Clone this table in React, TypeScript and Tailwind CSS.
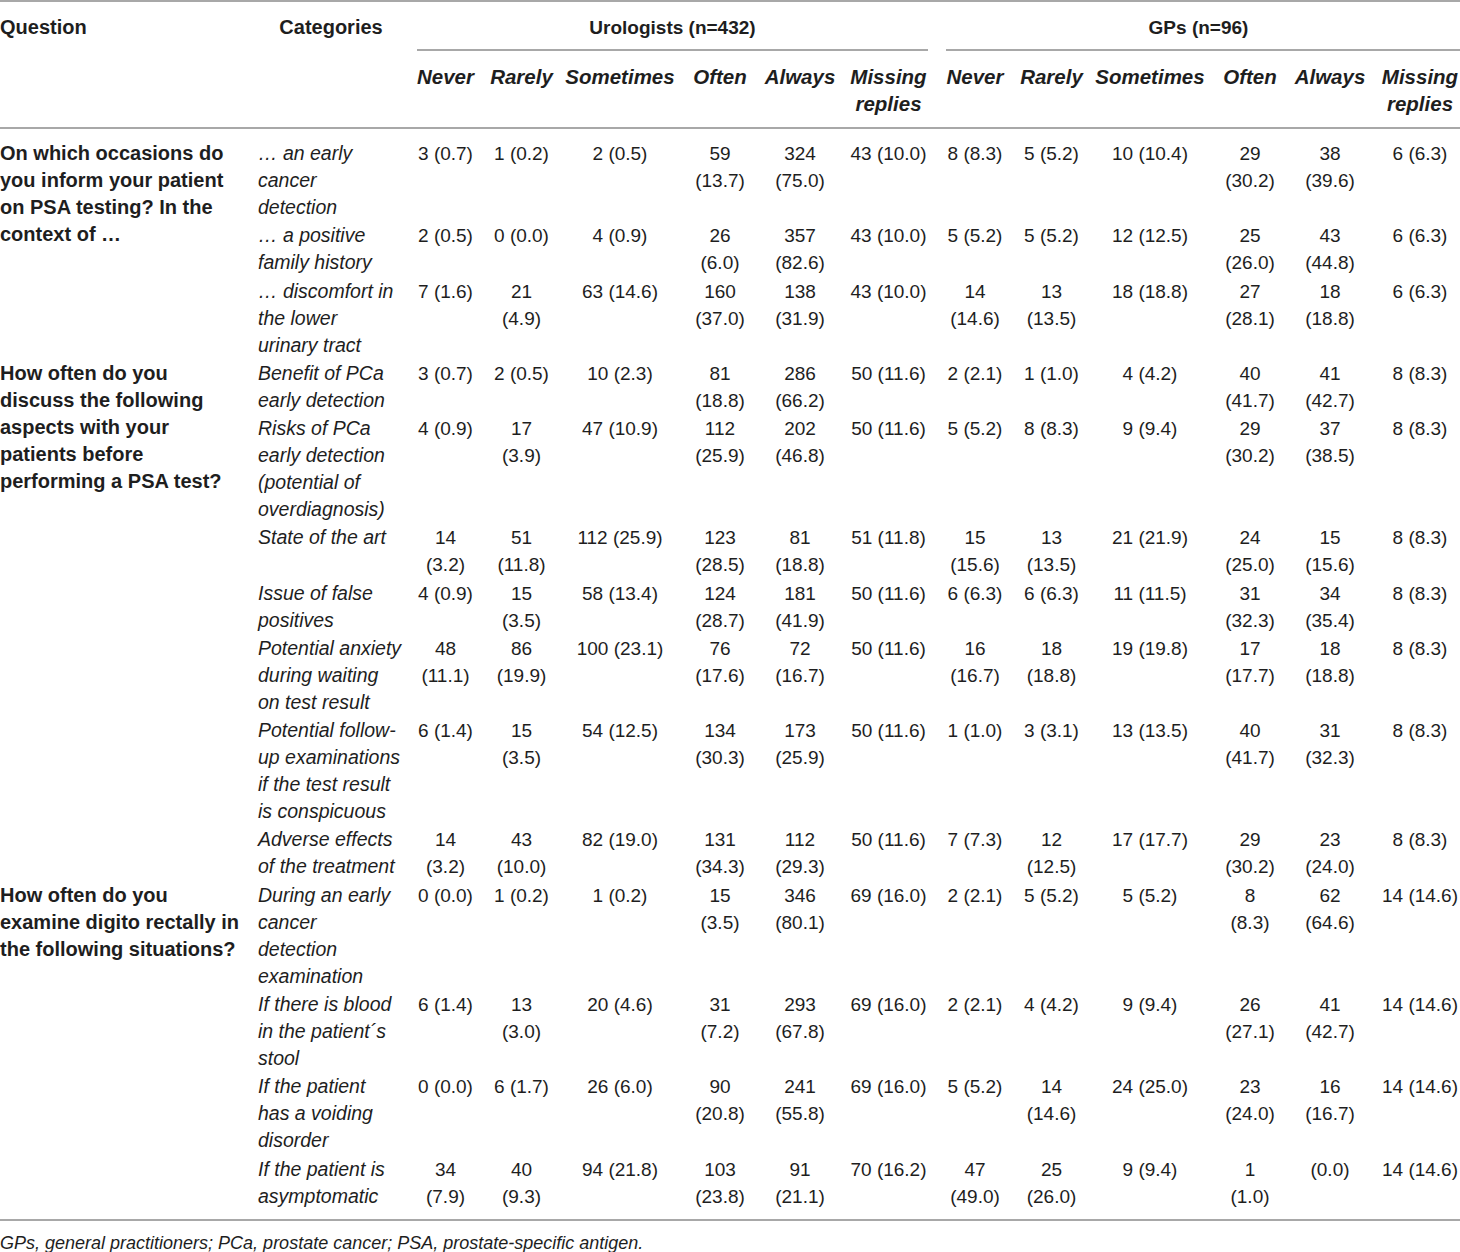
import React from 'react'

type Row = { cat: string; uro: string[]; gp: string[] }
type Group = { question: string; rows: Row[] }

const groups: Group[] = [
    {
        question: 'On which occasions do\nyou inform your patient\non PSA testing? In the\ncontext of …',
        rows: [
            {
                cat: '… an early\ncancer\ndetection',
                uro: ['3 (0.7)', '1 (0.2)', '2 (0.5)', '59\n(13.7)', '324\n(75.0)', '43 (10.0)'],
                gp: ['8 (8.3)', '5 (5.2)', '10 (10.4)', '29\n(30.2)', '38\n(39.6)', '6 (6.3)'],
            },
            {
                cat: '… a positive\nfamily history',
                uro: ['2 (0.5)', '0 (0.0)', '4 (0.9)', '26\n(6.0)', '357\n(82.6)', '43 (10.0)'],
                gp: ['5 (5.2)', '5 (5.2)', '12 (12.5)', '25\n(26.0)', '43\n(44.8)', '6 (6.3)'],
            },
            {
                cat: '… discomfort in\nthe lower\nurinary tract',
                uro: ['7 (1.6)', '21\n(4.9)', '63 (14.6)', '160\n(37.0)', '138\n(31.9)', '43 (10.0)'],
                gp: ['14\n(14.6)', '13\n(13.5)', '18 (18.8)', '27\n(28.1)', '18\n(18.8)', '6 (6.3)'],
            },
        ],
    },
    {
        question: 'How often do you\ndiscuss the following\naspects with your\npatients before\nperforming a PSA test?',
        rows: [
            {
                cat: 'Benefit of PCa\nearly detection',
                uro: ['3 (0.7)', '2 (0.5)', '10 (2.3)', '81\n(18.8)', '286\n(66.2)', '50 (11.6)'],
                gp: ['2 (2.1)', '1 (1.0)', '4 (4.2)', '40\n(41.7)', '41\n(42.7)', '8 (8.3)'],
            },
            {
                cat: 'Risks of PCa\nearly detection\n(potential of\noverdiagnosis)',
                uro: ['4 (0.9)', '17\n(3.9)', '47 (10.9)', '112\n(25.9)', '202\n(46.8)', '50 (11.6)'],
                gp: ['5 (5.2)', '8 (8.3)', '9 (9.4)', '29\n(30.2)', '37\n(38.5)', '8 (8.3)'],
            },
            {
                cat: 'State of the art',
                uro: ['14\n(3.2)', '51\n(11.8)', '112 (25.9)', '123\n(28.5)', '81\n(18.8)', '51 (11.8)'],
                gp: ['15\n(15.6)', '13\n(13.5)', '21 (21.9)', '24\n(25.0)', '15\n(15.6)', '8 (8.3)'],
            },
            {
                cat: 'Issue of false\npositives',
                uro: ['4 (0.9)', '15\n(3.5)', '58 (13.4)', '124\n(28.7)', '181\n(41.9)', '50 (11.6)'],
                gp: ['6 (6.3)', '6 (6.3)', '11 (11.5)', '31\n(32.3)', '34\n(35.4)', '8 (8.3)'],
            },
            {
                cat: 'Potential anxiety\nduring waiting\non test result',
                uro: ['48\n(11.1)', '86\n(19.9)', '100 (23.1)', '76\n(17.6)', '72\n(16.7)', '50 (11.6)'],
                gp: ['16\n(16.7)', '18\n(18.8)', '19 (19.8)', '17\n(17.7)', '18\n(18.8)', '8 (8.3)'],
            },
            {
                cat: 'Potential follow-\nup examinations\nif the test result\nis conspicuous',
                uro: ['6 (1.4)', '15\n(3.5)', '54 (12.5)', '134\n(30.3)', '173\n(25.9)', '50 (11.6)'],
                gp: ['1 (1.0)', '3 (3.1)', '13 (13.5)', '40\n(41.7)', '31\n(32.3)', '8 (8.3)'],
            },
            {
                cat: 'Adverse effects\nof the treatment',
                uro: ['14\n(3.2)', '43\n(10.0)', '82 (19.0)', '131\n(34.3)', '112\n(29.3)', '50 (11.6)'],
                gp: ['7 (7.3)', '12\n(12.5)', '17 (17.7)', '29\n(30.2)', '23\n(24.0)', '8 (8.3)'],
            },
        ],
    },
    {
        question: 'How often do you\nexamine digito rectally in\nthe following situations?',
        rows: [
            {
                cat: 'During an early\ncancer\ndetection\nexamination',
                uro: ['0 (0.0)', '1 (0.2)', '1 (0.2)', '15\n(3.5)', '346\n(80.1)', '69 (16.0)'],
                gp: ['2 (2.1)', '5 (5.2)', '5 (5.2)', '8\n(8.3)', '62\n(64.6)', '14 (14.6)'],
            },
            {
                cat: 'If there is blood\nin the patient´s\nstool',
                uro: ['6 (1.4)', '13\n(3.0)', '20 (4.6)', '31\n(7.2)', '293\n(67.8)', '69 (16.0)'],
                gp: ['2 (2.1)', '4 (4.2)', '9 (9.4)', '26\n(27.1)', '41\n(42.7)', '14 (14.6)'],
            },
            {
                cat: 'If the patient\nhas a voiding\ndisorder',
                uro: ['0 (0.0)', '6 (1.7)', '26 (6.0)', '90\n(20.8)', '241\n(55.8)', '69 (16.0)'],
                gp: ['5 (5.2)', '14\n(14.6)', '24 (25.0)', '23\n(24.0)', '16\n(16.7)', '14 (14.6)'],
            },
            {
                cat: 'If the patient is\nasymptomatic',
                uro: ['34\n(7.9)', '40\n(9.3)', '94 (21.8)', '103\n(23.8)', '91\n(21.1)', '70 (16.2)'],
                gp: ['47\n(49.0)', '25\n(26.0)', '9 (9.4)', '1\n(1.0)', '(0.0)', '14 (14.6)'],
            },
        ],
    },
]

const subHeads = ['Never', 'Rarely', 'Sometimes', 'Often', 'Always', 'Missing\nreplies']

const cols = 'grid grid-cols-[258px_150px_75px_77px_120px_80px_80px_97px_76px_77px_120px_80px_80px_90px]'

export default function App() {
    return (
        <div className="w-[1460px] bg-white text-[#1e1e1e] font-['Liberation_Sans',Arial,sans-serif]">
            <div className="h-[2px] bg-[#a8a8a8]" />

            {/* Header */}
            <div className={cols}>
                <div className="pt-[11.5px] text-[20px] font-bold leading-[27px]">Question</div>
                <div className="pt-[11.5px] pr-[4px] text-center text-[20px] font-bold leading-[27px]">Categories</div>
                <div className="col-span-6 flex flex-col">
                    <div className="pt-[11.5px] pb-[8.5px] text-center text-[19px] font-bold leading-[27px]">
                        Urologists (n=432)
                    </div>
                    <div className="mx-[9px] h-[2px] bg-[#a8a8a8]" />
                </div>
                <div className="col-span-6 flex flex-col">
                    <div className="pt-[11.5px] pb-[8.5px] text-center text-[19px] font-bold leading-[27px]">
                        GPs (n=96)
                    </div>
                    <div className="ml-[9px] h-[2px] bg-[#a8a8a8]" />
                </div>

                <div />
                <div />
                {[...subHeads, ...subHeads].map((h, i) => (
                    <div
                        key={i}
                        className={
                            'whitespace-pre pt-[11.5px] pb-[10.5px] text-center text-[20.5px] font-bold italic leading-[27px]' +
                            (i === 11 ? ' pl-[10px]' : '')
                        }
                    >
                        {h}
                    </div>
                ))}
            </div>

            <div className="h-[2px] bg-[#a8a8a8]" />

            {/* Body */}
            <div className={cols + ' pt-[10.3px] pb-[8.5px]'}>
                {groups.map((g, gi) => (
                    <React.Fragment key={gi}>
                        <div
                            className={
                                'col-start-1 whitespace-pre py-[0.65px] text-[20px] font-bold leading-[27px] ' +
                                (g.rows.length === 3 ? 'row-span-3' : g.rows.length === 7 ? 'row-span-7' : 'row-span-4')
                            }
                        >
                            {g.question}
                        </div>
                        {g.rows.map((r, ri) => (
                            <React.Fragment key={ri}>
                                <div className="col-start-2 whitespace-pre py-[0.65px] text-[19.5px] italic leading-[27px]">
                                    {r.cat}
                                </div>
                                {[...r.uro, ...r.gp].map((v, vi) => (
                                    <div
                                        key={vi}
                                        className={
                                            'whitespace-pre py-[0.65px] text-center text-[19px] leading-[27px]' +
                                            (vi === 11 ? ' pl-[10px]' : '')
                                        }
                                    >
                                        {v}
                                    </div>
                                ))}
                            </React.Fragment>
                        ))}
                    </React.Fragment>
                ))}
            </div>

            <div className="h-[2px] bg-[#a8a8a8]" />

            {/* Footnote */}
            <p className="pt-[11px] text-[18px] italic leading-[22px]">
                GPs, general practitioners; PCa, prostate cancer; PSA, prostate-specific antigen.
            </p>
        </div>
    )
}
